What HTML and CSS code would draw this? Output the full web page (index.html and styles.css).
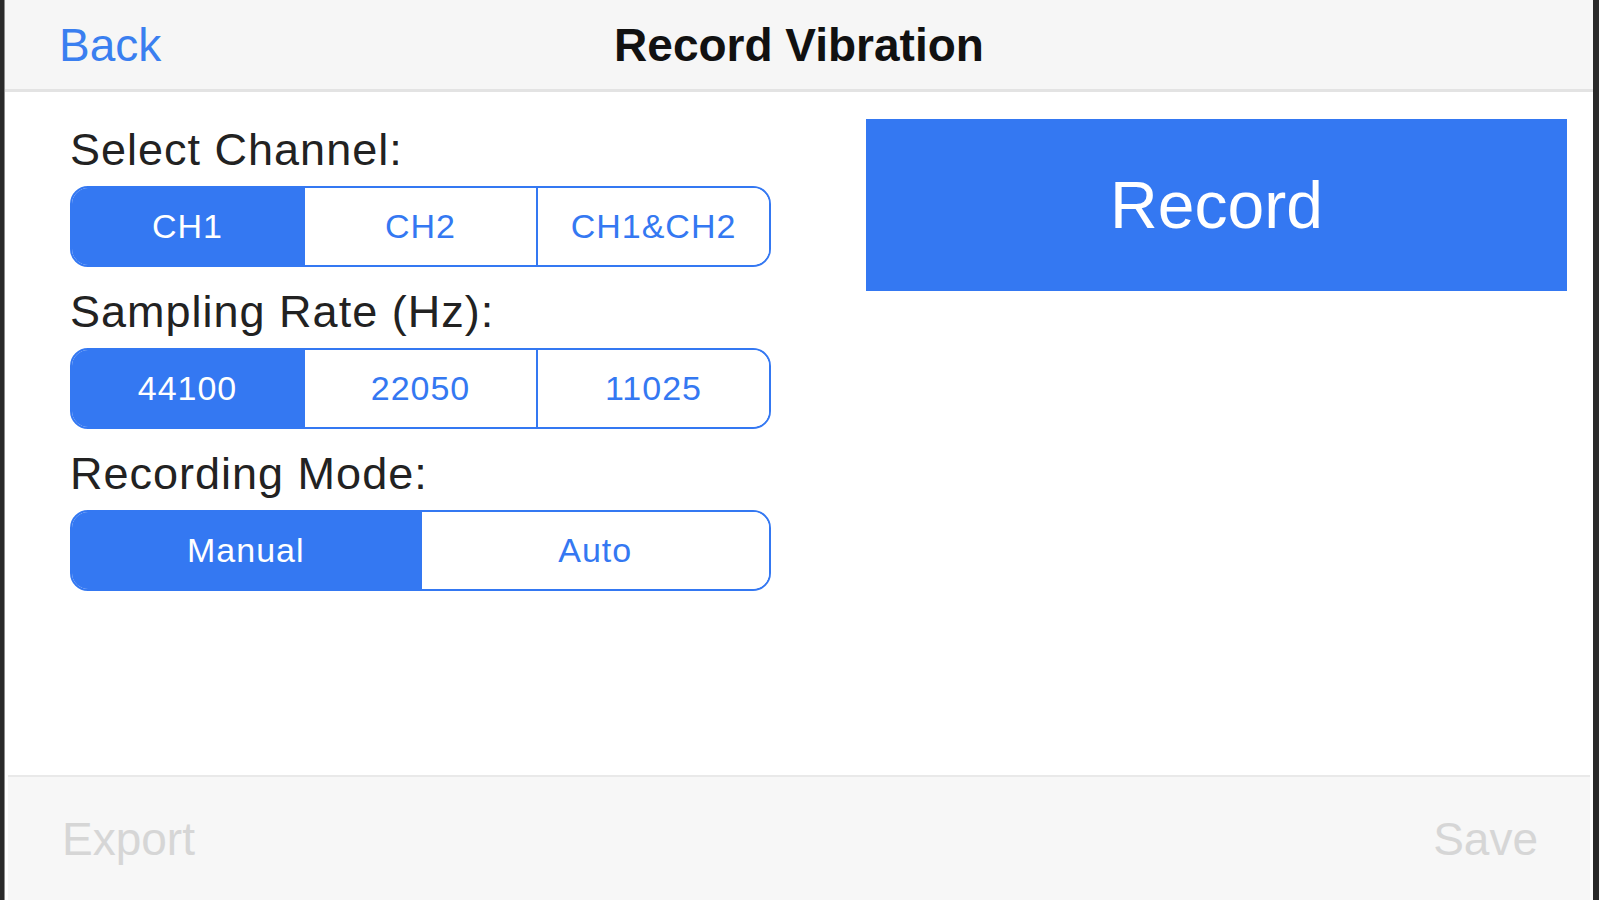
FILE: index.html
```html
<!DOCTYPE html>
<html>
<head>
    <title>Record Vibration</title>
    <link rel="stylesheet" href="styles.css">
</head>
<body>
    <div class="screen">
        <div class="nav-bar">
            <a class="nav-back">Back</a>
            <h1 class="nav-title">Record Vibration</h1>
            <span></span>
        </div>

        <div class="content">
            <div class="options">
                <div class="option-label">Select Channel:</div>
                <div class="segmented">
                    <div class="segment selected">CH1</div>
                    <div class="segment">CH2</div>
                    <div class="segment">CH1&amp;CH2</div>
                </div>

                <div class="option-label">Sampling Rate (Hz):</div>
                <div class="segmented">
                    <div class="segment selected">44100</div>
                    <div class="segment">22050</div>
                    <div class="segment">11025</div>
                </div>

                <div class="option-label">Recording Mode:</div>
                <div class="segmented">
                    <div class="segment selected">Manual</div>
                    <div class="segment">Auto</div>
                </div>
            </div>

            <button class="record-btn">Record</button>
        </div>

        <div class="toolbar">
            <span class="toolbar-item">Export</span>
            <span class="toolbar-item">Save</span>
        </div>
    </div>
</body>
</html>
```

FILE: styles.css
```css
body {
    margin: 0;
    height: 900px;
    background: #2a2a2a;
    font-family: 'Liberation Sans', Arial, sans-serif;
}
.screen {
    margin: 0 6px 0 4px;
    height: 900px;
    background: #fff;
    border-left: 1px solid #8c8c8c;
    display: flex;
    flex-direction: column;
}
.nav-bar {
    height: 89px;
    background: #f6f6f6;
    border-bottom: 3px solid #e3e3e3;
    display: grid;
    grid-template-columns: 1fr auto 1fr;
    align-items: center;
    padding: 0 54px;
}
.nav-back {
    color: #3a7ff0;
    font-size: 46px;
    line-height: 54px;
}
.nav-title {
    margin: 0;
    font-size: 46px;
    line-height: 54px;
    font-weight: bold;
    color: #111;
}
.content {
    flex: 1;
    display: flex;
    align-items: flex-start;
}
.options {
    width: 701px;
    padding: 31px 0 0 65px;
}
.option-label {
    font-size: 45px;
    line-height: 54px;
    letter-spacing: 1px;
    color: #222;
    margin-bottom: 9px;
}
.segmented {
    display: flex;
    height: 81px;
    box-sizing: border-box;
    border: 2px solid #3478f2;
    border-radius: 18px;
    overflow: hidden;
    margin-bottom: 18px;
}
.segment {
    flex: 1;
    display: flex;
    align-items: center;
    justify-content: center;
    font-size: 34px;
    letter-spacing: 1px;
    color: #3478f2;
    background: #fff;
}
.segment + .segment {
    border-left: 2px solid #3478f2;
}
.segment.selected {
    background: #3478f2;
    color: #fff;
}
.record-btn {
    margin: 27px 26px 0 auto;
    width: 701px;
    height: 172px;
    border: none;
    background: #3478f2;
    color: #fff;
    font-family: 'Liberation Sans', Arial, sans-serif;
    font-size: 66px;
}
.toolbar {
    height: 123px;
    margin: 0 3px;
    background: #f7f7f7;
    border-top: 2px solid #e9e9e9;
    display: flex;
    align-items: center;
    justify-content: space-between;
    padding: 0 52px 0 54px;
}
.toolbar-item {
    font-size: 46px;
    line-height: 54px;
    color: #d6d6d6;
}
```
